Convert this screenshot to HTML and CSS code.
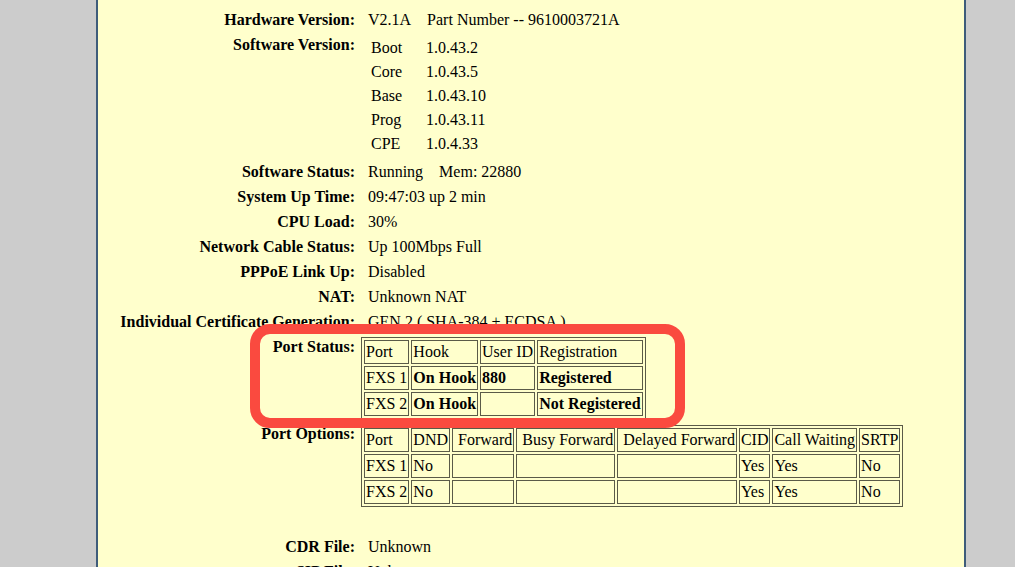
FILE: index.html
```html
<!DOCTYPE html>
<html lang="en">
<head>
<meta charset="utf-8">
<title>Status</title>
<link rel="stylesheet" href="styles.css">
</head>
<body>
<div class="page">
  <div class="info">
    <div class="lbl">Product Model:</div>
    <div class="val">HT802</div>

    <div class="lbl">Hardware Version:</div>
    <div class="val">V2.1A&nbsp;&nbsp;&nbsp;&nbsp;Part Number -- 9610003721A</div>

    <div class="lbl">Software Version:</div>
    <div class="val sw">
      <div class="swgrid">
        <span>Boot</span><span>1.0.43.2</span>
        <span>Core</span><span>1.0.43.5</span>
        <span>Base</span><span>1.0.43.10</span>
        <span>Prog</span><span>1.0.43.11</span>
        <span>CPE</span><span>1.0.4.33</span>
      </div>
    </div>

    <div class="lbl">Software Status:</div>
    <div class="val">Running&nbsp;&nbsp;&nbsp;&nbsp;Mem: 22880</div>

    <div class="lbl">System Up Time:</div>
    <div class="val">09:47:03 up 2 min</div>

    <div class="lbl">CPU Load:</div>
    <div class="val">30%</div>

    <div class="lbl">Network Cable Status:</div>
    <div class="val">Up 100Mbps Full</div>

    <div class="lbl">PPPoE Link Up:</div>
    <div class="val">Disabled</div>

    <div class="lbl">NAT:</div>
    <div class="val">Unknown NAT</div>

    <div class="lbl">Individual Certificate Generation:</div>
    <div class="val">GEN 2 ( SHA-384 + ECDSA )</div>

    <div class="lbl">Port Status:</div>
    <div class="tcell ps">
      <table class="data">
        <tr><td>Port</td><td>Hook</td><td>User ID</td><td>Registration</td></tr>
        <tr><td>FXS 1</td><td class="b">On Hook</td><td class="b">880</td><td class="b">Registered</td></tr>
        <tr><td>FXS 2</td><td class="b">On Hook</td><td></td><td class="b">Not Registered</td></tr>
      </table>
    </div>

    <div class="lbl">Port Options:</div>
    <div class="tcell po">
      <table class="data">
        <tr><td>Port</td><td>DND</td><td>&nbsp;Forward</td><td>&nbsp;Busy Forward</td><td>&nbsp;Delayed Forward</td><td>CID</td><td>Call Waiting</td><td>SRTP</td></tr>
        <tr><td>FXS 1</td><td>No</td><td></td><td></td><td></td><td>Yes</td><td>Yes</td><td>No</td></tr>
        <tr><td>FXS 2</td><td>No</td><td></td><td></td><td></td><td>Yes</td><td>Yes</td><td>No</td></tr>
      </table>
    </div>

    <div class="lbl">CDR File:</div>
    <div class="val">Unknown</div>

    <div class="lbl">SIP File:</div>
    <div class="val">Unknown</div>
  </div>
  <div class="mark"></div>
</div>
</body>
</html>
```

FILE: styles.css
```css
html, body {
  margin: 0;
  padding: 0;
  height: 100%;
  overflow: hidden;
}

body {
  background: #cccccc;
  font-family: "Liberation Serif", "Times New Roman", serif;
  font-size: 16px;
  color: #000000;
}

.page {
  display: flow-root;
  position: relative;
  margin-left: 96px;
  width: 866px;
  min-height: 100%;
  background: #ffffcc;
  border-left: 2px solid #3e5c7a;
  border-right: 2px solid #3e5c7a;
}

.info {
  display: grid;
  grid-template-columns: 235px 1fr;
  column-gap: 6px;
  padding-left: 22px;
  margin-top: -18px;
}

.lbl {
  font-weight: bold;
  text-align: right;
  line-height: 25px;
  white-space: nowrap;
}

.val {
  line-height: 25px;
  padding-left: 7px;
  white-space: nowrap;
}

.sw {
  padding-top: 4px;
  padding-bottom: 3px;
  padding-left: 10px;
}

.swgrid {
  display: grid;
  grid-template-columns: 55px auto;
  line-height: 24px;
}

.tcell.ps {
  padding-top: 3px;
  padding-bottom: 2px;
}

.tcell.po {
  padding-top: 4px;
  padding-bottom: 27px;
}

.data {
  border-collapse: separate;
  border-spacing: 2px;
  border: 1px solid #5a5a48;
  font-size: 16px;
}

.data td {
  border: 1px solid #5a5a48;
  padding: 1px;
  line-height: 20px;
  white-space: nowrap;
}

.data td.b {
  font-weight: bold;
}

.mark {
  position: absolute;
  left: 152px;
  top: 324px;
  width: 435px;
  height: 104px;
  box-sizing: border-box;
  border: 10px solid #fa4a3f;
  border-radius: 20px;
}
```
